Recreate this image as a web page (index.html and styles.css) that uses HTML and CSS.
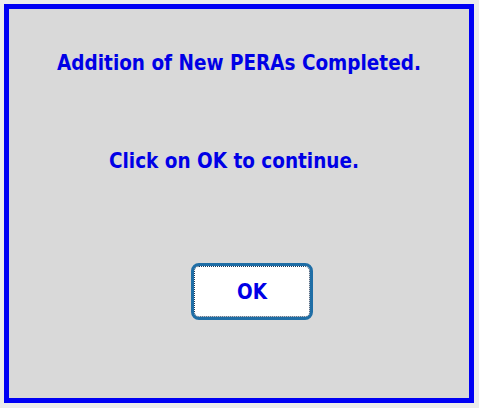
FILE: index.html
```html
<!DOCTYPE html>
<html>
<head>
<meta charset="utf-8">
<link rel="stylesheet" href="styles.css">
</head>
<body>
<div class="dialog">
  <p class="title">Addition of New PERAs Completed.</p>
  <p class="message">Click on OK to continue.</p>
  <div class="actions">
    <button class="ok">OK</button>
  </div>
</div>
</body>
</html>
```
FILE: styles.css
```css
html, body {
  margin: 0;
  padding: 0;
}
body {
  width: 479px;
  height: 408px;
  background: #ececec;
  padding: 4px;
  box-sizing: border-box;
  font-family: "DejaVu Sans Condensed", "DejaVu Sans", sans-serif;
}
.dialog {
  width: 470px;
  height: 399px;
  box-sizing: border-box;
  border: 5px solid #0000f4;
  background: #d9d9d9;
  display: flex;
  flex-direction: column;
  align-items: center;
}
.title, .message {
  margin: 0;
  color: #0000e6;
  font-weight: bold;
  font-size: 20.5px;
  line-height: 24px;
}
.title {
  margin-top: 42px;
}
.message {
  margin-top: 74px;
  margin-right: 10px;
}
.actions {
  margin-top: 90px;
  margin-left: 26px;
}
.ok {
  width: 122px;
  height: 57px;
  box-sizing: border-box;
  border: 3px solid #1f6ea6;
  border-radius: 8px;
  background: #ffffff;
  color: #0000e6;
  font-family: "DejaVu Sans Condensed", "DejaVu Sans", sans-serif;
  font-weight: bold;
  font-size: 20.5px;
  outline: 1px dotted #1f3a5a;
  outline-offset: -4px;
  padding: 0;
}
```
